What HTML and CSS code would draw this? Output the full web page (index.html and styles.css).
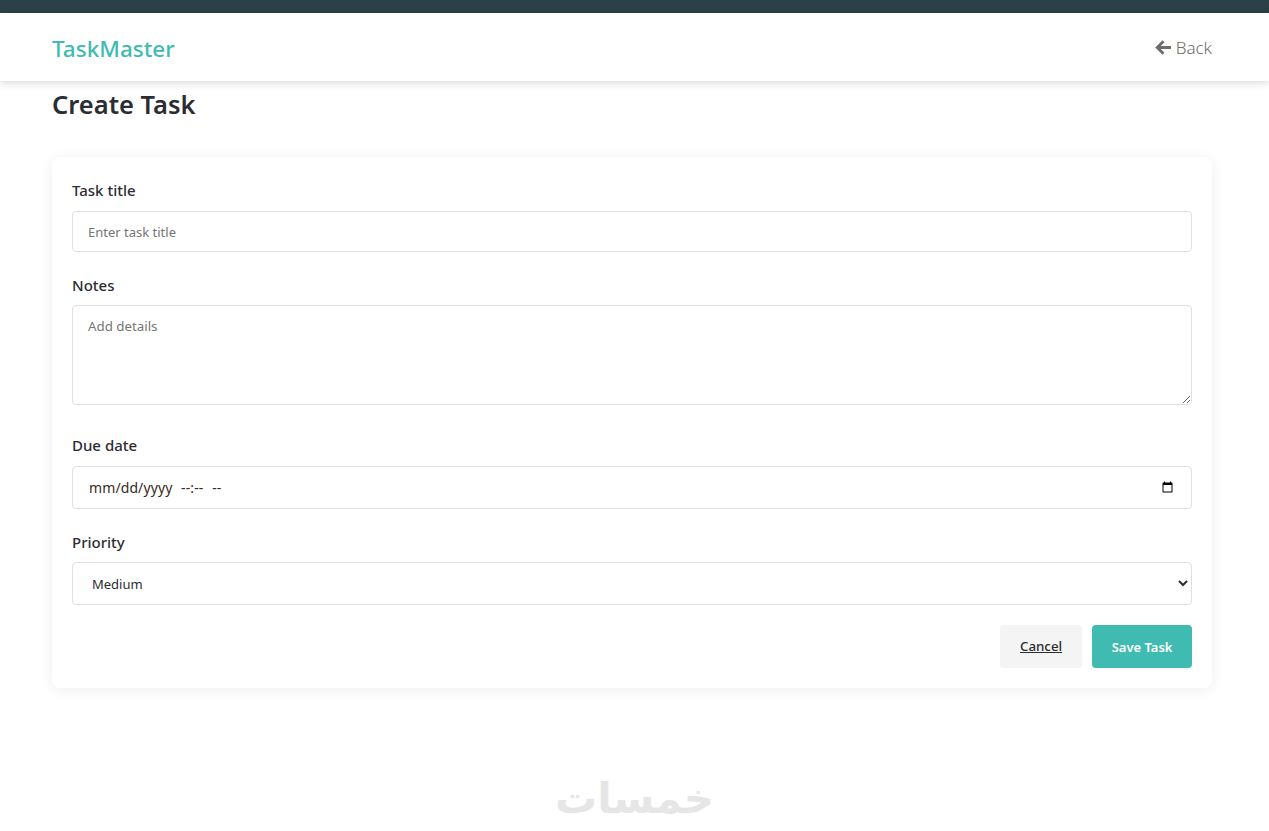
FILE: index.html
```html
<!DOCTYPE html>
<html lang="en">
<head>
    <meta charset="UTF-8">
    <meta name="viewport" content="width=device-width, initial-scale=1.0">
    <title>TaskMaster - Create Task</title>
    <link rel="stylesheet" href="styles.css">
</head>
<body>

<div class="top-strip"></div>

<header class="site-header">
    <a href="#" class="logo">TaskMaster</a>
    <a href="#" class="back-link">
        <svg class="back-icon" viewBox="0 0 16 15" width="16" height="15" aria-hidden="true">
            <path d="M8.5 1.2 2.2 7.5l6.3 6.3M2.5 7.5H16" fill="none" stroke="currentColor" stroke-width="2.8"/>
        </svg>
        Back
    </a>
</header>

<main class="page">
    <h1 class="page-title">Create Task</h1>

    <form class="task-form">
        <div class="field">
            <label for="title">Task title</label>
            <input id="title" class="control" type="text" placeholder="Enter task title">
        </div>
        <div class="field field-notes">
            <label for="notes">Notes</label>
            <textarea id="notes" class="control notes" placeholder="Add details"></textarea>
        </div>
        <div class="field">
            <label for="due">Due date</label>
            <div class="date-wrap">
                <input id="due" class="control date" type="datetime-local">
                <!-- the browser's own format has a comma, the design has none -->
                <span class="date-mask">mm/dd/yyyy --:-- --</span>
            </div>
        </div>
        <div class="field">
            <label for="priority">Priority</label>
            <select id="priority" class="control select">
                <option>Low</option>
                <option selected>Medium</option>
                <option>High</option>
            </select>
        </div>
        <div class="form-actions">
            <a href="#" class="btn btn-cancel">Cancel</a>
            <button type="button" class="btn btn-save">Save Task</button>
        </div>
    </form>
</main>

<div class="watermark" lang="ar" dir="rtl">خمسات</div>

</body>
</html>
```

FILE: styles.css
```css
* {
    box-sizing: border-box;
}

body {
    margin: 0;
    height: 831px;
    overflow: hidden;
    position: relative;
    background-color: #fff;
    color: #2b2d33;
    font-family: 'Noto Sans', 'Open Sans', sans-serif;
}

.top-strip {
    height: 13px;
    background-color: #2b4147;
}

.site-header {
    height: 68px;
    padding: 0 57px 0 52px;
    display: flex;
    justify-content: space-between;
    align-items: center;
    background-color: #fff;
    box-shadow: 0 2px 8px rgba(0, 0, 0, 0.15);
}

.logo {
    margin-top: 2px;
    font-size: 22.5px;
    font-weight: 500;
    color: #3fbbb1;
    text-decoration: none;
}

.back-link {
    display: flex;
    align-items: center;
    gap: 5px;
    font-size: 17px;
    font-weight: 300;
    color: #6f6b6b;
    text-decoration: none;
}

.page {
    padding: 0 57px 0 52px;
}

.page-title {
    margin: 4px 0 34px;
    font-size: 25.5px;
    line-height: 38px;
    font-weight: 600;
}

/* Form card */
.task-form {
    padding: 20px;
    background-color: #fff;
    border-radius: 8px;
    box-shadow: 0 2px 14px rgba(0, 0, 0, 0.07);
}

.field {
    margin-bottom: 20px;
}

.field-notes {
    margin-bottom: 27px;
}

.field label {
    display: block;
    margin-bottom: 7px;
    padding-top: 1px;
    font-size: 15px;
    line-height: 25.5px;
    font-weight: 500;
}

.control {
    display: block;
    width: 100%;
    height: 41px;
    padding: 1px 15px 0;
    border: 1px solid #dfdfdf;
    border-radius: 4px;
    background-color: #fff;
    font-family: inherit;
    font-size: 13px;
    color: #2b2d33;
}

.control::placeholder {
    color: #757575;
}

.notes {
    height: 100px;
    padding: 11px 15px;
    font-size: 13.3px;
    resize: vertical;
}

.date-wrap {
    position: relative;
}

.date {
    height: 43px;
}

.date::-webkit-datetime-edit {
    visibility: hidden;
}

.date-mask {
    position: absolute;
    left: 17px;
    top: 0;
    line-height: 44px;
    font-size: 14px;
    letter-spacing: 0.1px;
    word-spacing: 5px;
    color: #3a2a22;
    pointer-events: none;
}

.select {
    height: 43px;
}

.form-actions {
    display: flex;
    justify-content: flex-end;
    gap: 10px;
}

.btn {
    height: 43px;
    padding: 0 20px;
    display: flex;
    align-items: center;
    border: none;
    border-radius: 4px;
    font-family: inherit;
    font-size: 13px;
    font-weight: 600;
}

.btn-cancel {
    padding-bottom: 1px;
    background-color: #f4f4f4;
    color: #2b2d33;
    font-size: 13.3px;
    font-weight: 500;
}

.btn-save {
    padding: 0 19.5px;
    background-color: #3fbbb1;
    color: #fff;
}

.watermark {
    position: absolute;
    left: 0;
    right: 0;
    bottom: 2px;
    text-align: center;
    font-family: 'DejaVu Sans', sans-serif;
    font-size: 42px;
    font-weight: 700;
    line-height: 60px;
    color: #e6e6e6;
}
```
